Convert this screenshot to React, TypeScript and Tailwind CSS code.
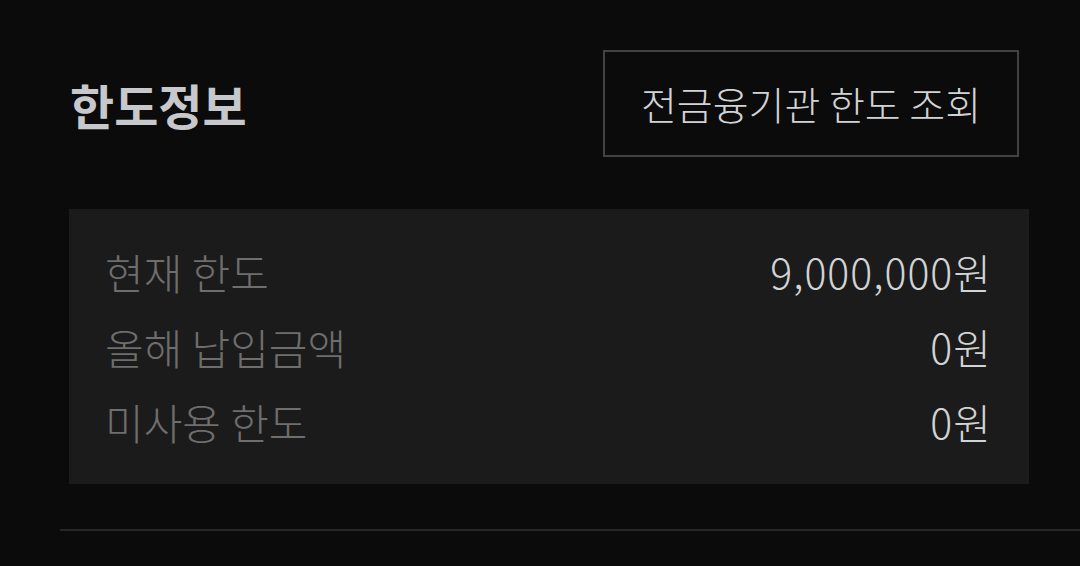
import React from 'react';

const ROWS = [
  { label: '현재 한도', value: '9,000,000원' },
  { label: '올해 납입금액', value: '0원' },
  { label: '미사용 한도', value: '0원' },
];

const App: React.FC = () => {
  return (
    <div
      className="w-full h-[566px] overflow-hidden bg-[#0b0b0b]"
      style={{ fontFamily: '"Noto Sans CJK KR", "Noto Sans", sans-serif' }}
    >
      {/* Header */}
      <div className="flex items-center justify-between pt-[50px] pl-[70px] pr-[61px]">
        <h2 className="text-[48px] font-bold text-[#c6c8cb] leading-none">한도정보</h2>
        <button className="w-[416px] h-[107px] border-2 border-[#424242] text-[39px] font-light text-[#d2d3d5] flex items-center justify-center">
          전금융기관 한도 조회
        </button>
      </div>

      {/* Limit panel */}
      <div className="mt-[52px] ml-[69px] mr-[51px] bg-[#1b1b1b] py-[25px] pl-[36px] pr-[37px]">
        {ROWS.map((row) => (
          <div key={row.label} className="flex items-center justify-between h-[75px]">
            <span className="text-[42px] font-light text-[#6e6e6e]">{row.label}</span>
            <span className="text-[41px] font-light tracking-[1px] text-[#d2d3d5]">{row.value}</span>
          </div>
        ))}
      </div>

      {/* Divider */}
      <div className="mt-[45px] ml-[60px] h-[2px] bg-[#262626]" />
    </div>
  );
};

export default App;
